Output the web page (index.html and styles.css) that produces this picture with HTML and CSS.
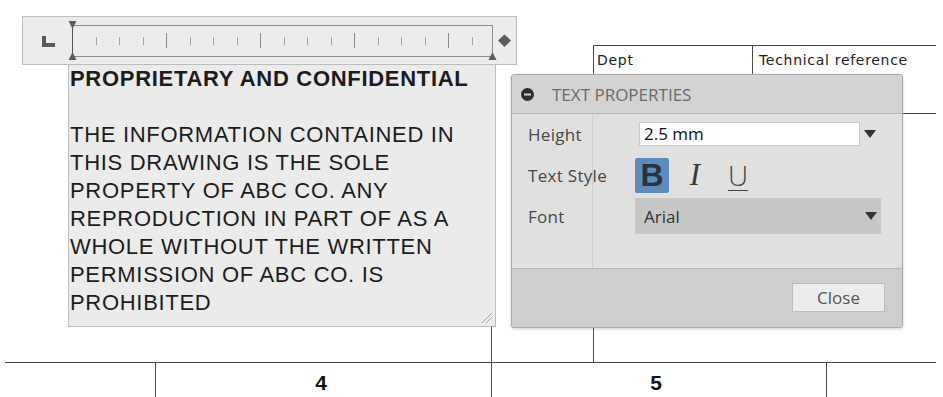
FILE: index.html
```html
<!DOCTYPE html>
<html>
<head>
    <meta charset="UTF-8">
    <title>Text Properties</title>
    <link rel="stylesheet" href="styles.css">
</head>
<body>
    <div class="sheet">
        <!-- drawing frame lines -->
        <svg class="drawing" width="943" height="397" viewBox="0 0 943 397">
            <g class="frame">
                <line x1="5" y1="362.5" x2="936" y2="362.5"/>
                <line x1="155.5" y1="362" x2="155.5" y2="397"/>
                <line x1="491.5" y1="300" x2="491.5" y2="397"/>
                <line x1="593.5" y1="45" x2="593.5" y2="362"/>
                <line x1="826.5" y1="362" x2="826.5" y2="397"/>
                <line x1="593" y1="45.5" x2="936" y2="45.5"/>
                <line x1="752.5" y1="45" x2="752.5" y2="80"/>
                <line x1="903" y1="113.5" x2="936" y2="113.5"/>
            </g>
            <text class="cell-text" x="597" y="65">Dept</text>
            <text class="cell-text" x="759" y="65">Technical reference</text>
            <text class="zone-num" x="321" y="390">4</text>
            <text class="zone-num" x="656" y="390">5</text>
        </svg>

        <div class="ruler">
            <svg width="493" height="47" viewBox="23 17 493 47">
                <rect x="42" y="36" width="4" height="11" class="tab-l"/>
                <rect x="42" y="43" width="13" height="4" class="tab-l"/>
                <rect x="72.5" y="25.5" width="420" height="31" class="track"/>
                <g class="tick">
                    <line x1="96.5" y1="37" x2="96.5" y2="45"/>
                    <line x1="119.5" y1="37" x2="119.5" y2="45"/>
                    <line x1="143.5" y1="37" x2="143.5" y2="45"/>
                    <line x1="190.5" y1="37" x2="190.5" y2="45"/>
                    <line x1="213.5" y1="37" x2="213.5" y2="45"/>
                    <line x1="237.5" y1="37" x2="237.5" y2="45"/>
                    <line x1="284.5" y1="37" x2="284.5" y2="45"/>
                    <line x1="307.5" y1="37" x2="307.5" y2="45"/>
                    <line x1="331.5" y1="37" x2="331.5" y2="45"/>
                    <line x1="378.5" y1="37" x2="378.5" y2="45"/>
                    <line x1="401.5" y1="37" x2="401.5" y2="45"/>
                    <line x1="425.5" y1="37" x2="425.5" y2="45"/>
                    <line x1="472.5" y1="37" x2="472.5" y2="45"/>
                </g>
                <g class="tick-long">
                    <line x1="166.5" y1="33" x2="166.5" y2="48"/>
                    <line x1="260.5" y1="33" x2="260.5" y2="48"/>
                    <line x1="354.5" y1="33" x2="354.5" y2="48"/>
                    <line x1="448.5" y1="33" x2="448.5" y2="48"/>
                </g>
                <line x1="72.5" y1="28" x2="72.5" y2="54" class="indent-line"/>
                <polygon points="68.5,21 76.5,21 72.5,29" class="marker"/>
                <polygon points="68.5,60 76.5,60 72.5,52" class="marker"/>
                <polygon points="488.5,60 496.5,60 492.5,52" class="marker"/>
                <polygon points="504.5,34.5 511,40.5 504.5,47 498,40.5" class="marker"/>
            </svg>
        </div>

        <div class="note">
            <p class="note-title">PROPRIETARY AND CONFIDENTIAL</p>
            <p class="note-body">THE INFORMATION CONTAINED IN<br>THIS DRAWING IS THE SOLE<br>PROPERTY OF ABC CO. ANY<br>REPRODUCTION IN PART OF AS A<br>WHOLE WITHOUT THE WRITTEN<br>PERMISSION OF ABC CO. IS<br>PROHIBITED</p>
            <svg class="grip" width="12" height="12" viewBox="0 0 12 12">
                <line x1="1" y1="11" x2="11" y2="1"/>
                <line x1="5" y1="11" x2="11" y2="5"/>
            </svg>
        </div>

        <div class="panel">
            <div class="panel-head">
                <svg width="13" height="13" viewBox="0 0 13 13">
                    <circle cx="6.5" cy="6.5" r="6.5" fill="#2e2e2e"/>
                    <rect x="3" y="5.5" width="7" height="2" fill="#d3d3d3"/>
                </svg>
                <span>TEXT PROPERTIES</span>
            </div>
            <div class="panel-body">
                <div class="prop-row">
                    <div class="prop-label">Height</div>
                    <div class="prop-control">
                        <div class="text-input">2.5 mm</div>
                        <span class="caret"></span>
                    </div>
                </div>
                <div class="prop-row">
                    <div class="prop-label">Text Style</div>
                    <div class="prop-control">
                        <span class="style-btn bold active">B</span>
                        <span class="style-btn italic">I</span>
                        <span class="style-btn underline">U</span>
                    </div>
                </div>
                <div class="prop-row">
                    <div class="prop-label">Font</div>
                    <div class="prop-control">
                        <div class="select">
                            <span>Arial</span>
                            <span class="caret"></span>
                        </div>
                    </div>
                </div>
            </div>
            <div class="panel-foot">
                <button class="close-btn">Close</button>
            </div>
        </div>
    </div>
</body>
</html>
```

FILE: styles.css
```css
body {
    margin: 0;
    background: #fff;
    font-family: "Open Sans", "Liberation Sans", sans-serif;
}
.sheet {
    position: relative;
    width: 943px;
    height: 397px;
    overflow: hidden;
}
.drawing {
    position: absolute;
    left: 0;
    top: 0;
}
.frame line {
    stroke: #4a4a4a;
    stroke-width: 1;
    shape-rendering: crispEdges;
}
.cell-text {
    font-family: "DejaVu Sans", sans-serif;
    font-size: 14px;
    letter-spacing: 0.7px;
    fill: #222;
}
.zone-num {
    font-family: "Liberation Sans", Arial, sans-serif;
    font-size: 21px;
    font-weight: bold;
    fill: #111;
    text-anchor: middle;
}
.ruler {
    position: absolute;
    left: 22px;
    top: 16px;
    width: 495px;
    height: 49px;
    box-sizing: border-box;
    border: 1px solid #bdbdbd;
    background: #ececec;
}
.ruler svg {
    display: block;
}
.tab-l {
    fill: #5a5a5a;
}
.track {
    fill: none;
    stroke: #8c8c8c;
    shape-rendering: crispEdges;
}
.tick line {
    stroke: #a2a2a2;
    shape-rendering: crispEdges;
}
.tick-long line {
    stroke: #8a8a8a;
    shape-rendering: crispEdges;
}
.indent-line {
    stroke: #555;
    shape-rendering: crispEdges;
}
.marker {
    fill: #5c5c5c;
}
.note {
    position: absolute;
    left: 68px;
    top: 64px;
    width: 428px;
    height: 263px;
    box-sizing: border-box;
    border: 1px solid #bdbdbd;
    background: #ebebeb;
    padding-left: 1px;
    font-family: "Liberation Sans", Arial, sans-serif;
    font-size: 22px;
    line-height: 28px;
    color: #1c1c1c;
}
.note p {
    margin: 0;
    white-space: nowrap;
}
.note-title {
    font-weight: bold;
    letter-spacing: 0.7px;
}
.note-body {
    margin-top: 28px !important;
    letter-spacing: 0.7px;
}
.grip {
    position: absolute;
    right: 2px;
    bottom: 2px;
}
.grip line {
    stroke: #aaa;
    stroke-width: 1;
}
.panel {
    position: absolute;
    left: 511px;
    top: 74px;
    width: 392px;
    height: 254px;
    box-sizing: border-box;
    border: 1px solid #a9a9a9;
    border-radius: 3px;
    background: #e0e0e0;
    box-shadow: 0 1px 3px rgba(0,0,0,0.2);
    display: flex;
    flex-direction: column;
    overflow: hidden;
}
.panel-head {
    height: 39px;
    box-sizing: border-box;
    flex: none;
    border-bottom: 1px solid #b4b4b4;
    background: #d3d3d3;
    display: flex;
    align-items: center;
    gap: 18px;
    padding-left: 9px;
    color: #6a6a6a;
    font-size: 17px;
}
.panel-head svg {
    display: block;
}
.panel-body {
    flex: 1;
    padding-top: 2px;
    background: linear-gradient(to right, transparent 80px, #d0d0d0 80px, #d0d0d0 81px, transparent 81px), #e0e0e0;
}
.prop-row {
    display: flex;
    align-items: center;
    height: 36px;
}
.prop-row + .prop-row {
    margin-top: 5px;
}
.prop-label {
    width: 81px;
    box-sizing: border-box;
    padding-left: 16px;
    font-size: 17px;
    letter-spacing: 0.3px;
    color: #474747;
    white-space: nowrap;
}
.prop-control {
    display: flex;
    align-items: center;
    padding-left: 42px;
}
.text-input {
    margin-left: 4px;
    width: 221px;
    height: 24px;
    box-sizing: border-box;
    border: 1px solid #c8c8c8;
    background: #fff;
    padding-left: 4px;
    font-size: 17px;
    line-height: 22px;
    color: #111;
}
.caret {
    width: 0;
    height: 0;
    border-left: 6.5px solid transparent;
    border-right: 6.5px solid transparent;
    border-top: 8px solid #333;
    margin-left: 4px;
}
.style-btn {
    width: 34px;
    height: 35px;
    display: flex;
    align-items: center;
    justify-content: center;
    color: #3a3a3a;
    margin-right: 9px;
}
.style-btn.active {
    background: #5b8cbb;
    border-radius: 2px;
}
.bold {
    font-family: "Liberation Sans", sans-serif;
    font-weight: bold;
    font-size: 32px;
    color: #28323e;
}
.italic {
    font-family: "Liberation Serif", serif;
    font-style: italic;
    font-size: 31px;
    color: #383838;
}
.underline {
    font-size: 28px;
    font-weight: 300;
    text-decoration: underline;
    text-decoration-thickness: 1px;
    text-underline-offset: 4px;
    color: #444;
}
.select {
    width: 246px;
    height: 36px;
    box-sizing: border-box;
    background: #c7c7c7;
    display: flex;
    align-items: center;
    justify-content: space-between;
    padding: 0 4px 0 9px;
    font-size: 17px;
    color: #333;
}
.panel-foot {
    height: 59px;
    box-sizing: border-box;
    flex: none;
    border-top: 1px solid #b6b6b6;
    background: #cecece;
    display: flex;
    justify-content: flex-end;
    align-items: flex-start;
    padding: 14px 17px 0 0;
}
.close-btn {
    width: 93px;
    height: 29px;
    box-sizing: border-box;
    border: 1px solid #bcbcbc;
    background: #ececec;
    font-family: "Open Sans", sans-serif;
    font-size: 17px;
    color: #555;
    padding: 0;
    line-height: 26px;
}
```
